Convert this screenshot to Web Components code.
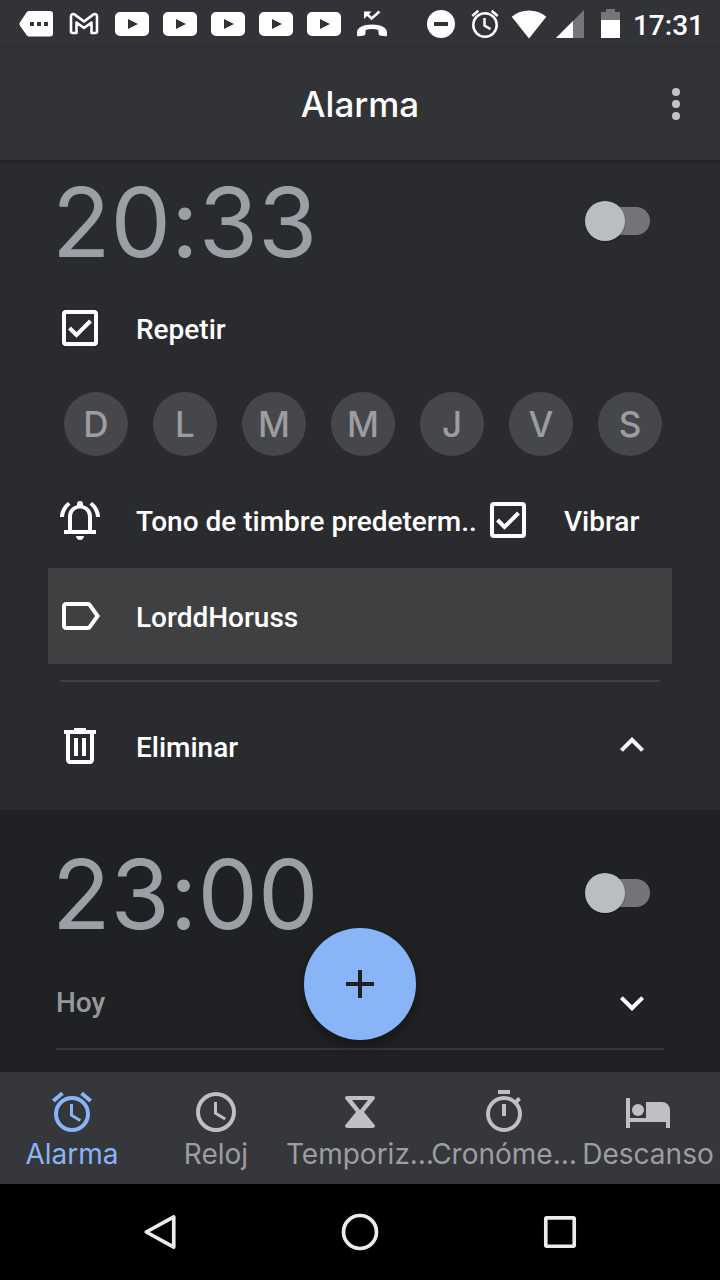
<!DOCTYPE html>
<html lang="es">
<head>
<meta charset="utf-8">
<meta name="viewport" content="width=device-width, initial-scale=1">
<title>Alarma</title>
<style>
html, body { margin: 0; background: #000; }
body { font-family: Roboto, "Liberation Sans", sans-serif; color: #fff; }
</style>
</head>
<body>
<clock-app></clock-app>
<script>
const define = (name, html, setup) => {
  const template = document.createElement('template');
  template.innerHTML = html;
  customElements.define(name, class extends HTMLElement {
    connectedCallback() {
      if (this.shadowRoot) return;
      this.attachShadow({ mode: 'open' }).append(template.content.cloneNode(true));
      if (setup) setup(this, this.shadowRoot);
    }
  });
};

const BUTTON = 'button{appearance:none;border:0;margin:0;padding:0;background:none;color:inherit;font:inherit;cursor:pointer}';

/* 24-unit icons, with 48-unit ones for the status and system bars */
const ICONS = {
  bell: '<path d="M12 22c1.1 0 2-.9 2-2h-4c0 1.100.9 2 2 2zM18 17v-6.500c0-3.070-1.630-5.250-4.500-5.930V4a1.500 1.500 0 0 0-3 0v.57C7.640 5.250 6 7.420 6 10.500V17H4v2h16v-2h-2zm-2 0H8v-6.500C8 8 9.520 6.250 12 6.250S16 8 16 10.500V17zM7.300 4.400 6 3C3.600 4.700 2.100 7.500 2 10.500h2c.1-2.400 1.400-4.700 3.300-6.100zM20 10.500h2c-.1-3-1.600-5.800-4-7.500l-1.300 1.400c1.900 1.400 3.200 3.700 3.300 6.100z"/>',
  label: '<path d="M17.630 5.840C17.270 5.330 16.670 5 16 5H5c-1.100 0-2 .9-2 2v10c0 1.100.9 2 2 2h11c.67 0 1.270-.33 1.630-.84L22 12l-4.370-6.160zM16 17H5V7h11l3.550 5L16 17z"/>',
  trash: '<path d="M15 4V3H9v1H4v2h1v13c0 1.100.9 2 2 2h10c1.100 0 2-.9 2-2V6h1V4h-5zm2 15H7V6h10v13zM9 8h2v9H9zm4 0h2v9h-2z"/>',
  up: '<path d="M7.410 14.910 12 10.330l4.590 4.580L18 13.500l-6-6-6 6z"/>',
  down: '<path d="M7.410 9.590 12 14.170l4.590-4.580L18 11l-6 6-6-6z"/>',
  more: '<circle cx="12" cy="6" r="2"/><circle cx="12" cy="12" r="2"/><circle cx="12" cy="18" r="2"/>',
  plus: '<path d="M19 13h-6v6h-2v-6H5v-2h6V5h2v6h6z"/>',
  alarm: '<path d="m22 5.720-4.600-3.860-1.290 1.530 4.600 3.860L22 5.720zM7.880 3.390 6.600 1.860 2 5.710l1.290 1.530 4.590-3.850zM12.500 8H11v6l4.750 2.850.75-1.230-4-2.370V8zM12 4a9 9 0 1 0 0 18 9 9 0 0 0 0-18zm0 16a7 7 0 1 1 0-14 7 7 0 0 1 0 14z"/>',
  clock: '<path d="M12 2a10 10 0 1 0 0 20 10 10 0 0 0 0-20zm0 18a8 8 0 1 1 0-16 8 8 0 0 1 0 16zm.5-13H11v6l5.250 3.150.75-1.230-4.500-2.670z"/>',
  timer: '<path fill-rule="evenodd" d="M4.500 5.200c0-.8.4-1.200 1.200-1.200h12.600c.8 0 1.200.4 1.200 1.200L14 12l5.500 6.800c0 .8-.4 1.200-1.200 1.200H5.700c-.8 0-1.200-.4-1.200-1.200L10 12zM8 6l4 5 4-5z"/>',
  stopwatch: '<path d="M15 1H9v2h6V1zm-4 13h2V8h-2v6zm8.030-6.610 1.420-1.420c-.43-.51-.9-.99-1.410-1.410l-1.420 1.420A9 9 0 1 0 21 13c0-2.120-.74-4.070-1.970-5.610zM12 20a7 7 0 1 1 0-14 7 7 0 0 1 0 14z"/>',
  bed: '<path d="M1 5v15h2v-3h18v3h2v-9a4 4 0 0 0-4-4h-8v8H3V5z"/><circle cx="7" cy="11" r="3"/>',
  chip: '<path d="M17.500 11H38c2 0 3 1 3 3v19.500c0 2-1 3-3 3H17.500c-1.500 0-2.400-.6-3.200-1.800L8.200 26c-1-1.500-1-2.500 0-4l6.100-9.200c.8-1.200 1.700-1.800 3.200-1.800z"/><path fill="#323336" d="M18 22h4v4h-4zm7 0h4v4h-4zm7 0h4v4h-4z"/>',
  mail: '<path fill="none" stroke="currentColor" stroke-width="2.600" stroke-linejoin="round" d="M12.500 33h4V22.500l7.500 5.500 7.500-5.500V33h4c1 0 1.500-.5 1.500-1.500V16.200c0-2-2.200-2.800-3.800-1.600L24 21.500l-9.200-6.900c-1.600-1.200-3.800-.4-3.800 1.600v15.300c0 1 .5 1.500 1.500 1.500z"/>',
  video: '<rect x="7" y="12" width="34" height="24" rx="5"/><path fill="#323336" d="m20 19 10 5-10 5z"/>',
  missed: '<path d="M9 35v-3c0-4 6-7.500 15-7.500s15 3.500 15 7.500v3c0 1-.6 1.400-1.500 1.200l-5.500-.7c-.8-.2-1.200-.6-1.300-1.400l-.4-4.100c-4-1.300-8.600-1.300-12.600 0l-.4 4.100c-.1.8-.5 1.200-1.300 1.400l-5.500.7c-.9.2-1.500-.2-1.500-1.200z"/><path fill="none" stroke="currentColor" stroke-width="2.500" d="m18 13 5.500 5.500L31.500 11.500"/><path d="M16 11.500h7.500L16 19z"/>',
  dnd: '<path fill-rule="evenodd" d="M24 10a14 14 0 1 0 0 28 14 14 0 0 0 0-28zM17 22h14v4H17z"/>',
  alarmSmall: '<g fill="none" stroke="currentColor" stroke-width="2.500"><circle cx="24" cy="25" r="11.700"/><path d="M23.500 18v7.500l6 3.600M11.300 16l6-5.200M36.700 16l-6-5.200"/></g>',
  wifi: '<path d="M24 38.500 6.700 16.700a27 27 0 0 1 34.600 0z"/>',
  signal: '<path fill="#757678" d="M37 10v28H9z"/><path d="M26 21v17H9z"/>',
  battery: '<path fill="#757678" d="M14 12h5V9h9v3h5v9H14z"/><path d="M14 20h19v18H14z"/>',
  back: '<path fill="none" stroke="currentColor" stroke-width="4" stroke-linejoin="round" d="M39 7.500v33L9 24z"/>',
  home: '<circle cx="24" cy="24" r="18" fill="none" stroke="currentColor" stroke-width="4"/>',
  recents: '<rect x="8.500" y="8.500" width="31" height="31" rx="1" fill="none" stroke="currentColor" stroke-width="4"/>'
};
const LARGE = ['chip', 'mail', 'video', 'missed', 'dnd', 'alarmSmall', 'wifi', 'signal', 'battery', 'back', 'home', 'recents'];

define('ui-icon', `<style>
:host{display:block;flex:none;width:48px;height:48px}
svg{display:block;width:100%;height:100%;fill:currentColor}
</style><svg aria-hidden="true"></svg>`, (host, root) => {
  const name = host.getAttribute('name');
  const svg = root.querySelector('svg');
  svg.setAttribute('viewBox', LARGE.includes(name) ? '0 0 48 48' : '0 0 24 24');
  svg.innerHTML = ICONS[name];
});

define('status-bar', `<style>
:host{display:flex;justify-content:space-between;height:48px;padding:0 16px 0 12px;background:#323336}
div{display:flex;align-items:center}
.state ui-icon{margin:0 -2px}
.state ui-icon.tight{margin:0 -4px}
time{font-size:28px;line-height:44px;font-weight:500;padding:4px 0 0 2px}
</style>
<div><ui-icon name="chip"></ui-icon><ui-icon name="mail"></ui-icon><ui-icon name="video"></ui-icon><ui-icon name="video"></ui-icon><ui-icon name="video"></ui-icon><ui-icon name="video"></ui-icon><ui-icon name="video"></ui-icon><ui-icon name="missed"></ui-icon></div>
<div class="state"><ui-icon name="dnd"></ui-icon><ui-icon name="alarmSmall"></ui-icon><ui-icon name="wifi"></ui-icon><ui-icon class="tight" name="signal"></ui-icon><ui-icon class="tight" name="battery"></ui-icon><time>17:31</time></div>`);

define('app-header', `<style>${BUTTON}
:host{display:grid;grid-template-columns:48px 1fr 48px;align-items:center;height:112px;padding:0 20px;background:#323336;box-shadow:0 1px 4px rgba(0,0,0,.35);position:relative;z-index:1}
h1{grid-column:2;margin:0;text-align:center;font:500 35px/48px Inter,"Open Sans",sans-serif}
button{color:#c1c1c6}
</style><h1><slot></slot></h1><button aria-label="Más opciones"><ui-icon name="more"></ui-icon></button>`);

define('alarm-switch', `<style>
:host{display:block}
input{appearance:none;display:flex;align-items:center;width:60px;height:28px;margin:0;border-radius:14px;background:#747578;cursor:pointer}
input::before{content:"";flex:none;width:40px;height:40px;margin-left:-5px;border-radius:50%;background:#babdc2;box-shadow:0 1px 2px rgba(0,0,0,.3)}
</style><input type="checkbox" role="switch" aria-label="Activar alarma">`);

define('alarm-time', `<style>${BUTTON}
:host{display:flex;align-items:center;justify-content:space-between;height:122px;padding:0 70px 0 52px;color:#9aa0a6}
button{padding-top:2px;font:400 96px/120px Inter,"Open Sans",sans-serif;font-feature-settings:"calt" 0}
</style><button><slot></slot></button><alarm-switch></alarm-switch>`);

define('check-field', `<style>
:host{display:flex}
label{display:flex;align-items:center;gap:32px;font-size:28px;line-height:36px;font-weight:500;cursor:pointer}
span.box{display:grid;place-items:center;width:48px;height:48px}
span.text{padding-top:4px}
input{grid-area:1/1;appearance:none;box-sizing:border-box;width:36px;height:36px;margin:0;border:4px solid #fff;border-radius:4px;cursor:pointer}
svg{grid-area:1/1;width:24px;height:24px;pointer-events:none;visibility:hidden}
input:checked+svg{visibility:visible}
</style><label><span class="box"><input type="checkbox" checked><svg viewBox="0 0 24 24" aria-hidden="true"><path d="m1.500 12 7 7L22.500 5" fill="none" stroke="#fff" stroke-width="4"/></svg></span><span class="text"><slot></slot></span></label>`);

define('icon-action', `<style>${BUTTON}
:host{display:flex;min-width:0}
button{display:flex;flex:1;min-width:0;align-items:center;gap:32px;text-align:left;font-size:28px;line-height:36px;font-weight:500}
span{padding-top:4px;white-space:nowrap}
</style><button><ui-icon></ui-icon><span><slot></slot></span></button>`, (host, root) => {
  const icon = document.createElement('ui-icon');
  icon.setAttribute('name', host.getAttribute('icon'));
  root.querySelector('ui-icon').replaceWith(icon);
});

define('day-picker', `<style>${BUTTON}
:host{display:flex;justify-content:space-between;padding:18px 58px 16px 64px}
button{width:64px;height:64px;border-radius:50%;background:#46474a;color:#9b9da2;font:500 35px/64px Inter,"Open Sans",sans-serif}
</style>
<button aria-label="Domingo" aria-pressed="false">D</button><button aria-label="Lunes" aria-pressed="false">L</button><button aria-label="Martes" aria-pressed="false">M</button><button aria-label="Miércoles" aria-pressed="false">M</button><button aria-label="Jueves" aria-pressed="false">J</button><button aria-label="Viernes" aria-pressed="false">V</button><button aria-label="Sábado" aria-pressed="false">S</button>`);

define('alarm-expanded', `<style>${BUTTON}
:host{display:block;background:#2a2b2f}
.row{display:flex;align-items:center;height:96px;padding:0 56px}
.repeat{height:92px}
.row>icon-action{flex:1}
.vibrate{width:180px}
.name{height:96px;margin:0 48px;padding:0 8px;background:#3f4042}
hr{height:2px;margin:16px 60px 0;border:0;background:#404144}
.end{height:128px;padding-right:64px}
</style>
<alarm-time>20:33</alarm-time>
<div class="row repeat"><check-field>Repetir</check-field></div>
<day-picker></day-picker>
<div class="row"><icon-action icon="bell">Tono de timbre predeterm..</icon-action><check-field class="vibrate">Vibrar</check-field></div>
<icon-action class="name" icon="label">LorddHoruss</icon-action>
<hr>
<div class="row end"><icon-action icon="trash">Eliminar</icon-action><button aria-label="Contraer"><ui-icon name="up"></ui-icon></button></div>`);

define('alarm-collapsed', `<style>${BUTTON}
:host{display:block;padding:22px 0}
.row{box-sizing:border-box;display:flex;align-items:center;justify-content:space-between;height:96px;margin:0 56px;padding-right:8px;border-bottom:2px solid #36373a;font-size:28px;line-height:36px;font-weight:500}
span{padding-top:4px;color:#97989b}
</style>
<alarm-time>23:00</alarm-time>
<div class="row"><span>Hoy</span><button aria-label="Expandir"><ui-icon name="down"></ui-icon></button></div>`);

define('add-button', `<style>${BUTTON}
:host{position:absolute;left:0;right:0;bottom:32px;display:flex;justify-content:center;pointer-events:none}
button{display:grid;place-items:center;width:112px;height:112px;border-radius:50%;background:#8ab4f8;color:#202124;box-shadow:0 6px 14px rgba(0,0,0,.35);pointer-events:auto}
</style><button aria-label="Añadir alarma"><ui-icon name="plus"></ui-icon></button>`);

define('nav-item', `<style>
:host{display:block;flex:1;min-width:0}
a{display:flex;flex-direction:column;align-items:center;padding:16px 0 12px;color:#9d9ea1;text-decoration:none;font:400 28px/36px Inter,"Open Sans",sans-serif;white-space:nowrap}
ui-icon{color:#bfc0c5}
:host([current]) a,:host([current]) ui-icon{color:#8ab4f8}
</style><a href="#"><ui-icon></ui-icon><span><slot></slot></span></a>`, (host, root) => {
  const icon = document.createElement('ui-icon');
  icon.setAttribute('name', host.getAttribute('icon'));
  root.querySelector('ui-icon').replaceWith(icon);
});

define('bottom-nav', `<style>
nav{display:flex;background:#36373b}
:host{display:block}
</style><nav><nav-item icon="alarm" current>Alarma</nav-item><nav-item icon="clock">Reloj</nav-item><nav-item icon="timer">Temporiz…</nav-item><nav-item icon="stopwatch">Cronóme…</nav-item><nav-item icon="bed">Descanso</nav-item></nav>`);

define('system-nav', `<style>${BUTTON}
:host{display:flex;height:96px;padding:0 60px;background:#000;color:#ececec}
button{flex:1;display:grid;place-items:center}
ui-icon{width:44px;height:44px}
</style><button aria-label="Atrás"><ui-icon name="back"></ui-icon></button><button aria-label="Inicio"><ui-icon name="home"></ui-icon></button><button aria-label="Recientes"><ui-icon name="recents"></ui-icon></button>`);

define('clock-app', `<style>
:host{display:flex;flex-direction:column;min-height:100vh;background:#202124}
main{flex:1;position:relative}
</style>
<status-bar></status-bar>
<app-header>Alarma</app-header>
<main><alarm-expanded></alarm-expanded><alarm-collapsed></alarm-collapsed><add-button></add-button></main>
<bottom-nav></bottom-nav>
<system-nav></system-nav>`);
</script>
</body>
</html>
